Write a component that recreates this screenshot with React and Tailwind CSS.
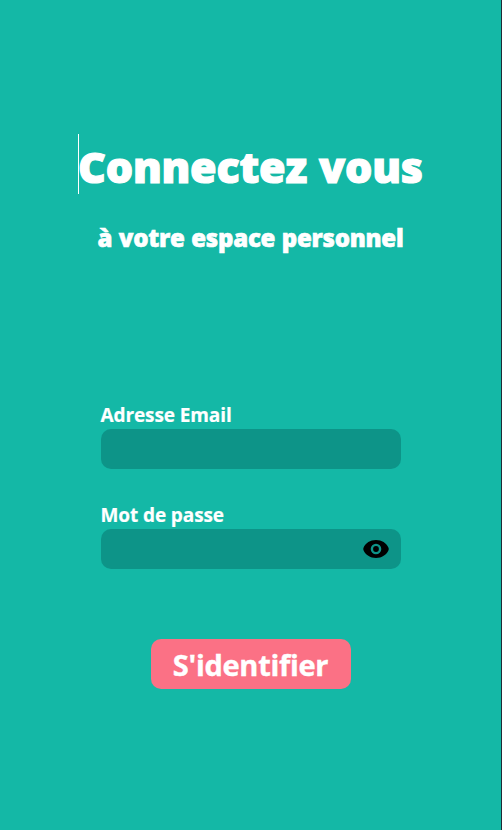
function EyeIcon() {
  return (
    <svg viewBox="0 0 26 18" className="h-[18px] w-[26px]" aria-hidden="true">
      <path
        fillRule="evenodd"
        fill="#000"
        d="M13 0C7.200 0 2.600 3 .5 7.700Q0 9 .5 10.300C2.600 15 7.200 18 13 18S23.400 15 25.500 10.300Q26 9 25.500 7.700C23.400 3 18.800 0 13 0ZM13 3.700A5.300 5.300 0 1 1 13 14.300A5.300 5.300 0 1 1 13 3.700Z"
      />
      <circle cx="13" cy="9" r="2.900" fill="#000" />
    </svg>
  );
}

function Field({ id, label, children }) {
  return (
    <div className="flex w-[300px] flex-col">
      <label htmlFor={id} className="flex h-7 items-center whitespace-nowrap text-[19px] font-bold leading-7 tracking-[-0.1px] [-webkit-text-stroke:0.2px_white]">
        {label}
      </label>
      <div className="flex h-10 items-center justify-end rounded-[10px] bg-[#0d9488] pr-3">
        <input id={id} className="h-full min-w-0 flex-1 bg-transparent px-3 outline-none" />
        {children}
      </div>
    </div>
  );
}

export default function App() {
  return (
    <main className="flex h-[830px] w-[502px] flex-col items-center overflow-hidden border-r border-[#202b36] bg-[#14b8a6] pt-[134px] font-['Open_Sans','Noto_Sans',sans-serif] text-white">
      <h1 className="flex h-[60px] w-[345px] items-center whitespace-nowrap border-l border-white pt-[5px] text-[43px] font-extrabold leading-[60px] tracking-[-0.2px] [-webkit-text-stroke:1.2px_white] [word-spacing:1px]">
        <span className="-ml-px">Connectez vous</span>
      </h1>
      <h2 className="mt-7 h-8 whitespace-nowrap text-[24px] font-extrabold leading-8 tracking-[-0.25px] [-webkit-text-stroke:0.6px_white] [word-spacing:0.6px]">à votre espace personnel</h2>
      <form className="mt-[147px] flex flex-col items-center">
        <div className="flex flex-col gap-8">
          <Field id="email" label="Adresse Email" />
          <Field id="password" label="Mot de passe">
            <EyeIcon />
          </Field>
        </div>
        <button type="button" className="mt-[70px] h-[50px] w-[200px] whitespace-nowrap rounded-[10px] bg-[#fb7185] pt-px text-[29px] font-bold leading-[49px] tracking-[-0.3px] [-webkit-text-stroke:0.4px_white]">
          S'identifier
        </button>
      </form>
    </main>
  );
}
